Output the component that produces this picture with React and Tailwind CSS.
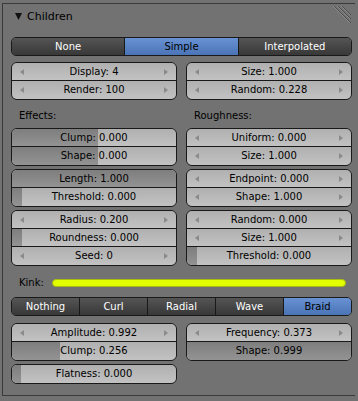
import React from 'react';

const Arrow = ({ dir }) => (
  <svg width="4" height="6" viewBox="0 0 4 6" className="shrink-0">
    {dir === 'l' ? (
      <polygon points="4,0 4,6 0,3" fill="#8a8a8a" />
    ) : (
      <polygon points="0,0 0,6 4,3" fill="#8a8a8a" />
    )}
  </svg>
);

const NumField = ({ label }) => (
  <div className="flex h-[18px] items-center justify-between px-[8px] bg-gradient-to-b from-[#b0b0b0] to-[#c2c2c2]">
    <Arrow dir="l" />
    <span className="leading-none">{label}</span>
    <Arrow dir="r" />
  </div>
);

const Slider = ({ label, fill }) => (
  <div className="relative flex h-[18px] items-center justify-center bg-gradient-to-b from-[#b0b0b0] to-[#c2c2c2]">
    <div
      className="absolute inset-y-0 left-0 bg-gradient-to-b from-[#7e7e7e] to-[#939393]"
      style={{ width: fill }}
    />
    <span className="relative leading-none">{label}</span>
  </div>
);

const Group = ({ children }) => (
  <div className="flex flex-col overflow-hidden rounded-[6px] border border-[#191919] divide-y divide-[#191919]">
    {children}
  </div>
);

const Enum = ({ items, selected }) => (
  <div className="flex h-[19px] overflow-hidden rounded-[5px] border border-[#191919]">
    {items.map((item, i) => (
      <div
        key={item}
        className={
          'flex flex-1 items-center justify-center leading-none ' +
          (i > 0 ? 'border-l border-[#191919] ' : '') +
          (item === selected
            ? 'bg-gradient-to-b from-[#6892d4] to-[#4a74b6] text-black'
            : 'bg-gradient-to-b from-[#555555] to-[#383838] text-white')
        }
      >
        {item}
      </div>
    ))}
  </div>
);

const Label = ({ children }) => (
  <div className="h-[28px] pt-[10px] pl-[8px] leading-[12px]">{children}</div>
);

const App = () => {
  return (
    <div className="w-[358px] h-[401px] overflow-hidden bg-[#727272] pl-[2px] font-['DejaVu_Sans',sans-serif] text-[10px] text-black">
      <div className="relative mt-[3px] h-[393px] w-[353px] border-t border-l border-b border-[#3a3a3a] pl-[8px] pr-[3px]">
        {/* header */}
        <div className="flex h-[24px] items-center pl-[4px]">
          <svg width="7" height="7" viewBox="0 0 7 7">
            <polygon points="0,0 7,0 3.5,7" fill="#111" />
          </svg>
          <span className="ml-[5px] text-[11px] leading-none">Children</span>
        </div>
        <svg className="absolute right-[4px] top-[2px]" width="18" height="18" viewBox="0 0 18 18">
          <line x1="0" y1="0" x2="17" y2="17" stroke="#8c8c8c" strokeWidth="1" />
          <line x1="1" y1="0" x2="18" y2="17" stroke="#4c4c4c" strokeWidth="1" />
          <line x1="4" y1="0" x2="17" y2="13" stroke="#8c8c8c" strokeWidth="1" />
          <line x1="5" y1="0" x2="18" y2="13" stroke="#4c4c4c" strokeWidth="1" />
          <line x1="8" y1="0" x2="17" y2="9" stroke="#8c8c8c" strokeWidth="1" />
          <line x1="9" y1="0" x2="18" y2="9" stroke="#4c4c4c" strokeWidth="1" />
        </svg>

        <div className="mt-[9px]">
          <Enum items={['None', 'Simple', 'Interpolated']} selected="Simple" />
        </div>

        <div className="mt-[6px] grid grid-cols-2 gap-x-[9px]">
          <Group>
            <NumField label="Display: 4" />
            <NumField label="Render: 100" />
          </Group>
          <Group>
            <NumField label="Size: 1.000" />
            <NumField label="Random: 0.228" />
          </Group>
        </div>

        <div className="grid grid-cols-2 gap-x-[9px]">
          <div className="flex flex-col">
            <Label>Effects:</Label>
            <div className="flex flex-col gap-[3px]">
              <Group>
                <Slider label="Clump: 0.000" fill="86px" />
                <Slider label="Shape: 0.000" fill="86px" />
              </Group>
              <Group>
                <Slider label="Length: 1.000" fill="100%" />
                <Slider label="Threshold: 0.000" fill="10px" />
              </Group>
              <Group>
                <NumField label="Radius: 0.200" />
                <Slider label="Roundness: 0.000" fill="10px" />
                <NumField label="Seed: 0" />
              </Group>
            </div>
          </div>
          <div className="flex flex-col">
            <Label>Roughness:</Label>
            <div className="flex flex-col gap-[3px]">
              <Group>
                <NumField label="Uniform: 0.000" />
                <NumField label="Size: 1.000" />
              </Group>
              <Group>
                <NumField label="Endpoint: 0.000" />
                <NumField label="Shape: 1.000" />
              </Group>
              <Group>
                <NumField label="Random: 0.000" />
                <NumField label="Size: 1.000" />
                <Slider label="Threshold: 0.000" fill="10px" />
              </Group>
            </div>
          </div>
        </div>

        {/* kink */}
        <div className="flex h-[31px] items-center pt-[3px]">
          <span className="w-[41px] shrink-0 pl-[8px] leading-none">Kink:</span>
          <div className="mr-[6px] h-[8px] flex-1 rounded-full border border-[#aabb10] bg-[#e2ff00]" />
        </div>

        <Enum items={['Nothing', 'Curl', 'Radial', 'Wave', 'Braid']} selected="Braid" />

        <div className="mt-[7px] grid grid-cols-2 gap-x-[9px]">
          <div className="flex flex-col gap-[3px]">
            <Group>
              <NumField label="Amplitude: 0.992" />
              <Slider label="Clump: 0.256" fill="48px" />
            </Group>
            <Group>
              <Slider label="Flatness: 0.000" fill="9px" />
            </Group>
          </div>
          <div className="flex flex-col">
            <Group>
              <NumField label="Frequency: 0.373" />
              <Slider label="Shape: 0.999" fill="100%" />
            </Group>
          </div>
        </div>
      </div>
    </div>
  );
};

export default App;
